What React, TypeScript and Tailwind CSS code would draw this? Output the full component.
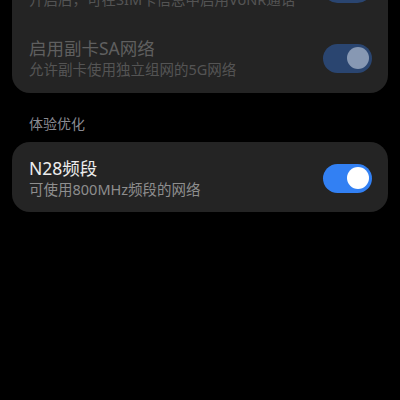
import React from "react";

function Toggle({ disabled }: { disabled?: boolean }) {
  return (
    <div
      className={
        "flex h-[29px] w-[49px] shrink-0 items-center justify-end rounded-full px-[3px] " +
        (disabled ? "bg-[#2a4570]" : "bg-[#3280f3]")
      }
    >
      <div
        className={
          "h-[22px] w-[22px] rounded-full " + (disabled ? "bg-[#8798b3]" : "bg-white")
        }
      />
    </div>
  );
}

function Row({
  title,
  sub,
  disabled,
  pt,
  pb,
}: {
  title: string;
  sub: string;
  disabled?: boolean;
  pt: string;
  pb: string;
}) {
  return (
    <div className={"flex items-center justify-between pl-[17px] pr-[16px] " + pt + " " + pb}>
      <div className="flex flex-col">
        <div
          className={
            "text-[17.5px] leading-[22px] " + (disabled ? "text-[#5f5f5f]" : "text-[#ededed]")
          }
        >
          {title}
        </div>
        <div
          className={
            "text-[14.5px] leading-[20px] " + (disabled ? "text-[#545454]" : "text-[#8e8e8e]")
          }
        >
          {sub}
        </div>
      </div>
      <Toggle disabled={disabled} />
    </div>
  );
}

export default function App() {
  return (
    <div
      className="h-[400px] w-[400px] overflow-hidden bg-black"
      style={{ fontFamily: '"Noto Sans", "Noto Sans CJK SC", sans-serif' }}
    >
      <div className="-mt-[47px] flex flex-col px-[12px]">
        <div className="flex flex-col rounded-[18px] bg-[#242424]">
          <Row
            title="VoNR高清通话"
            sub="开启后，可在SIM卡信息中启用VoNR通话"
            disabled
            pt="pt-[14px]"
            pb="pb-[14px]"
          />
          <Row
            title="启用副卡SA网络"
            sub="允许副卡使用独立组网的5G网络"
            disabled
            pt="pt-[14px]"
            pb="pb-[14px]"
          />
        </div>
        <div className="mt-[21px] mb-[8px] pl-[17px] text-[14px] leading-[20px] text-[#8a8a92]">
          体验优化
        </div>
        <div className="flex flex-col rounded-[18px] bg-[#242424]">
          <Row
            title="N28频段"
            sub="可使用800MHz频段的网络"
            pt="pt-[15px]"
            pb="pb-[13px]"
          />
        </div>
      </div>
    </div>
  );
}
